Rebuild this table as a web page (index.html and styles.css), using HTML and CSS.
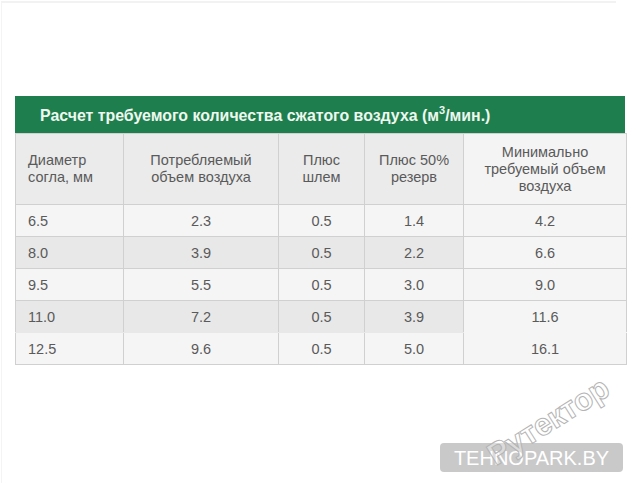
FILE: index.html
```html
<!DOCTYPE html>
<html lang="ru">
<head>
<meta charset="utf-8">
<link rel="stylesheet" href="styles.css">
</head>
<body>
<div class="frame">
  <div class="wrap">
    <div class="title">Расчет требуемого количества сжатого воздуха (м<sup>3</sup>/мин.)</div>
    <table class="grid">
      <colgroup>
        <col class="c1"><col class="c2"><col class="c3"><col class="c4"><col class="c5">
      </colgroup>
      <thead>
        <tr>
          <th class="left">Диаметр<br>согла, мм</th>
          <th>Потребляемый<br>объем воздуха</th>
          <th>Плюс<br>шлем</th>
          <th>Плюс 50%<br>резерв</th>
          <th class="last">Минимально<br>требуемый объем<br>воздуха</th>
        </tr>
      </thead>
      <tbody>
        <tr><td class="left">6.5</td><td>2.3</td><td>0.5</td><td>1.4</td><td class="last">4.2</td></tr>
        <tr class="alt"><td class="left">8.0</td><td>3.9</td><td>0.5</td><td>2.2</td><td class="last">6.6</td></tr>
        <tr><td class="left">9.5</td><td>5.5</td><td>0.5</td><td>3.0</td><td class="last">9.0</td></tr>
        <tr class="alt nob"><td class="left">11.0</td><td>7.2</td><td>0.5</td><td>3.9</td><td class="last">11.6</td></tr>
        <tr><td class="left">12.5</td><td>9.6</td><td>0.5</td><td>5.0</td><td class="last">16.1</td></tr>
      </tbody>
    </table>
  </div>
</div>
<div class="badge">TEHNOPARK.BY</div>
<div class="wm-text">Рутектор</div>
</body>
</html>
```
FILE: styles.css
```css
html, body {
  margin: 0;
  padding: 0;
  background: #ffffff;
}
body {
  width: 638px;
  height: 487px;
  position: relative;
  overflow: hidden;
  font-family: "Liberation Sans", Arial, sans-serif;
}
.frame {
  margin-left: 1px;
  margin-top: 1px;
  width: 614px;
  height: 480px;
  border-top: 2px solid #f2f2f2;
  border-left: 1px solid #f4f4f4;
}
.wrap {
  padding-top: 93px;
  padding-left: 13px;
  width: 610px;
}
.title {
  background: #1f7e4e;
  color: #eef8ee;
  font-weight: bold;
  font-size: 15.9px;
  height: 37px;
  line-height: 40px;
  padding-left: 25px;
  width: 585px;
  box-sizing: content-box;
}
.title sup {
  font-size: 11px;
  line-height: 0;
  vertical-align: 7px;
}
.grid {
  border-collapse: collapse;
  width: 611px;
  table-layout: fixed;
  color: #5a5a5a;
  font-size: 14.5px;
}
.c1 { width: 108px; }
.c2 { width: 155px; }
.c3 { width: 86px; }
.c4 { width: 99px; }
.c5 { width: 163px; }
.grid th, .grid td {
  border: 1px solid #d0d0d0;
  text-align: center;
  padding: 0;
}
.grid th {
  font-weight: normal;
  height: 70px;
  line-height: 17px;
  background: #ebebeb;
  color: #5a5a5a;
}
.grid th.last {
  background: #f4f4f4;
}
.grid td {
  height: 31px;
  background: #f5f5f5;
}
.grid .left {
  text-align: left;
  padding-left: 12px;
}
.grid tr.alt td {
  background: #e8e8e8;
}
.grid tr.alt td.last {
  background: #f5f5f5;
}
.grid tr.nob td {
  border-bottom: 1px solid #e8e8e8;
}
.grid tr.nob td.last {
  border-bottom: 1px solid #f5f5f5;
}
.badge {
  position: absolute;
  left: 440px;
  top: 443px;
  width: 183px;
  height: 29px;
  border-radius: 4px;
  background: #c9c9c9;
  color: #ffffff;
  font-size: 20px;
  line-height: 30px;
  text-align: center;
}
.wm-text {
  position: absolute;
  left: 500px;
  top: 437px;
  font-family: "Liberation Sans", Arial, sans-serif;
  font-weight: bold;
  font-size: 31px;
  line-height: 36px;
  color: rgba(255, 255, 255, 0.35);
  -webkit-text-stroke: 1px #b4b4b4;
  transform: rotate(-32deg);
  transform-origin: 0 100%;
  letter-spacing: -0.3px;
  white-space: nowrap;
}
```
